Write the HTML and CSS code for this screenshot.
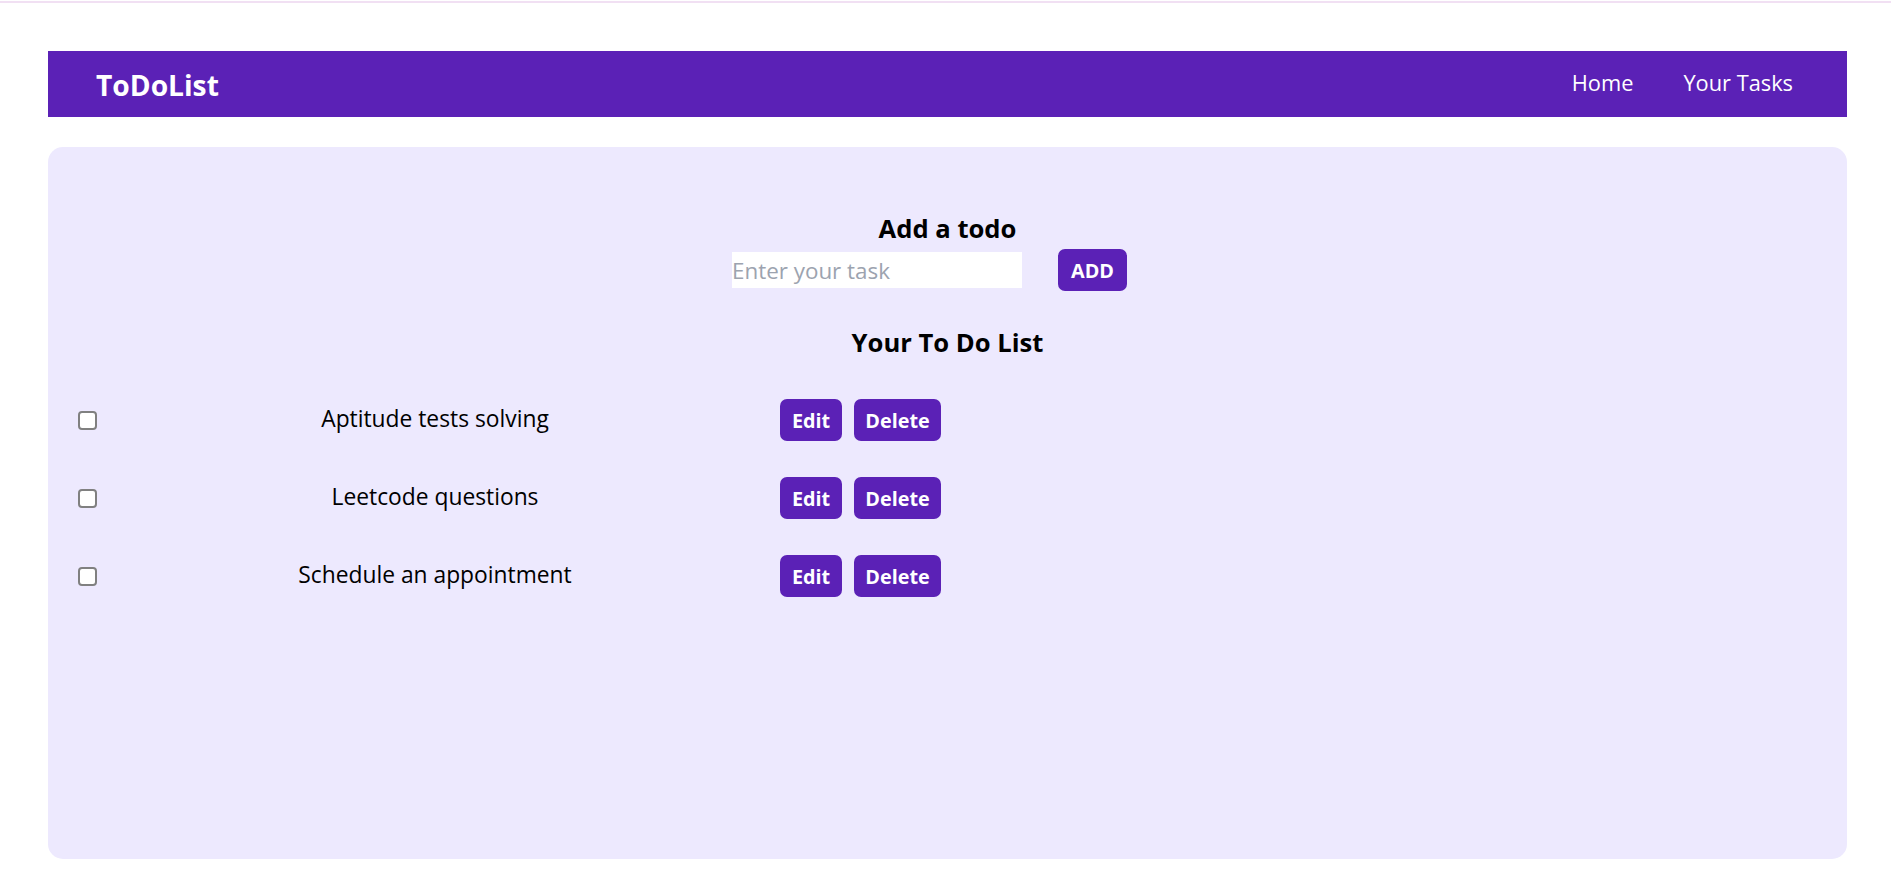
FILE: index.html
```html
<!DOCTYPE html>
<html lang="en">
<head>
<meta charset="utf-8">
<title>ToDoList</title>
<link rel="stylesheet" href="styles.css">
</head>
<body>
<div class="topline"></div>
<div class="page">
  <nav class="navbar">
    <span class="brand">ToDoList</span>
    <ul class="links">
      <li>Home</li>
      <li>Your Tasks</li>
    </ul>
  </nav>
  <main class="card">
    <h2 class="title">Add a todo</h2>
    <div class="add-row">
      <input class="task-input" type="text" placeholder="Enter your task">
      <button class="btn btn-add">ADD</button>
    </div>
    <h2 class="title list-title">Your To Do List</h2>
    <div class="todos">
      <div class="todo">
        <input class="check" type="checkbox">
        <div class="todo-text">Aptitude tests solving</div>
        <div class="actions">
          <button class="btn btn-edit">Edit</button>
          <button class="btn btn-delete">Delete</button>
        </div>
      </div>
      <div class="todo">
        <input class="check" type="checkbox">
        <div class="todo-text">Leetcode questions</div>
        <div class="actions">
          <button class="btn btn-edit">Edit</button>
          <button class="btn btn-delete">Delete</button>
        </div>
      </div>
      <div class="todo">
        <input class="check" type="checkbox">
        <div class="todo-text">Schedule an appointment</div>
        <div class="actions">
          <button class="btn btn-edit">Edit</button>
          <button class="btn btn-delete">Delete</button>
        </div>
      </div>
    </div>
  </main>
</div>
</body>
</html>
```

FILE: styles.css
```css
* { box-sizing: border-box; }

html, body {
  margin: 0;
  padding: 0;
  background: #ffffff;
  font-family: "Open Sans", "Noto Sans", "Liberation Sans", sans-serif;
  color: #000;
}

.topline {
  margin-top: 1px;
  height: 2px;
  background: #f1e0f3;
}

.page {
  padding: 48px 44px 0 48px;
}

.navbar {
  height: 66px;
  background: #5b21b6;
  color: #fff;
  display: flex;
  align-items: center;
  justify-content: space-between;
  padding: 0 54px 0 48px;
}

.brand {
  font-size: 28.2px;
  font-weight: 700;
  line-height: 36px;
  margin-top: 2px;
}

.links {
  list-style: none;
  margin: 0;
  padding: 0;
  display: flex;
  gap: 50px;
  font-size: 21.8px;
  line-height: 30px;
  margin-top: -3px;
}

.card {
  margin-top: 30px;
  height: 712px;
  background: #ede9fe;
  border-radius: 15px;
  padding-top: 66px;
  display: flex;
  flex-direction: column;
}

.title {
  margin: 0;
  text-align: center;
  font-size: 25.6px;
  font-weight: 700;
  line-height: 32px;
}

.add-row {
  margin-top: 4px;
  display: flex;
  justify-content: center;
  align-items: center;
  height: 42px;
}

.task-input {
  width: 290px;
  height: 36px;
  border: none;
  outline: none;
  padding: 0;
  background: #fff;
  font-family: inherit;
  font-size: 22.4px;
  color: #000;
}

.task-input::placeholder {
  color: #9ca3af;
}

.btn {
  height: 42px;
  padding: 0;
  border: none;
  border-radius: 7px;
  background: #5b21b6;
  color: #fff;
  font-family: inherit;
  font-size: 19.8px;
  font-weight: 700;
  cursor: pointer;
}

.btn-add {
  margin: 0 36px;
  width: 69px;
}

.list-title {
  margin-top: 36px;
}

.todos {
  margin-top: 40px;
  display: flex;
  flex-direction: column;
  gap: 36px;
}

.todo {
  display: flex;
  align-items: center;
  height: 42px;
  padding-left: 30px;
}

.check {
  appearance: none;
  -webkit-appearance: none;
  width: 19px;
  height: 19px;
  margin: 0;
  border: 2px solid #808080;
  border-radius: 4px;
  background: #fff;
  flex: none;
}

.todo-text {
  width: 676px;
  text-align: center;
  font-size: 22.8px;
  line-height: 30px;
  margin-top: -2px;
}

.actions {
  margin-left: 7px;
  display: flex;
  gap: 12px;
}

.btn-edit {
  width: 62px;
}

.btn-delete {
  width: 87px;
}
```
